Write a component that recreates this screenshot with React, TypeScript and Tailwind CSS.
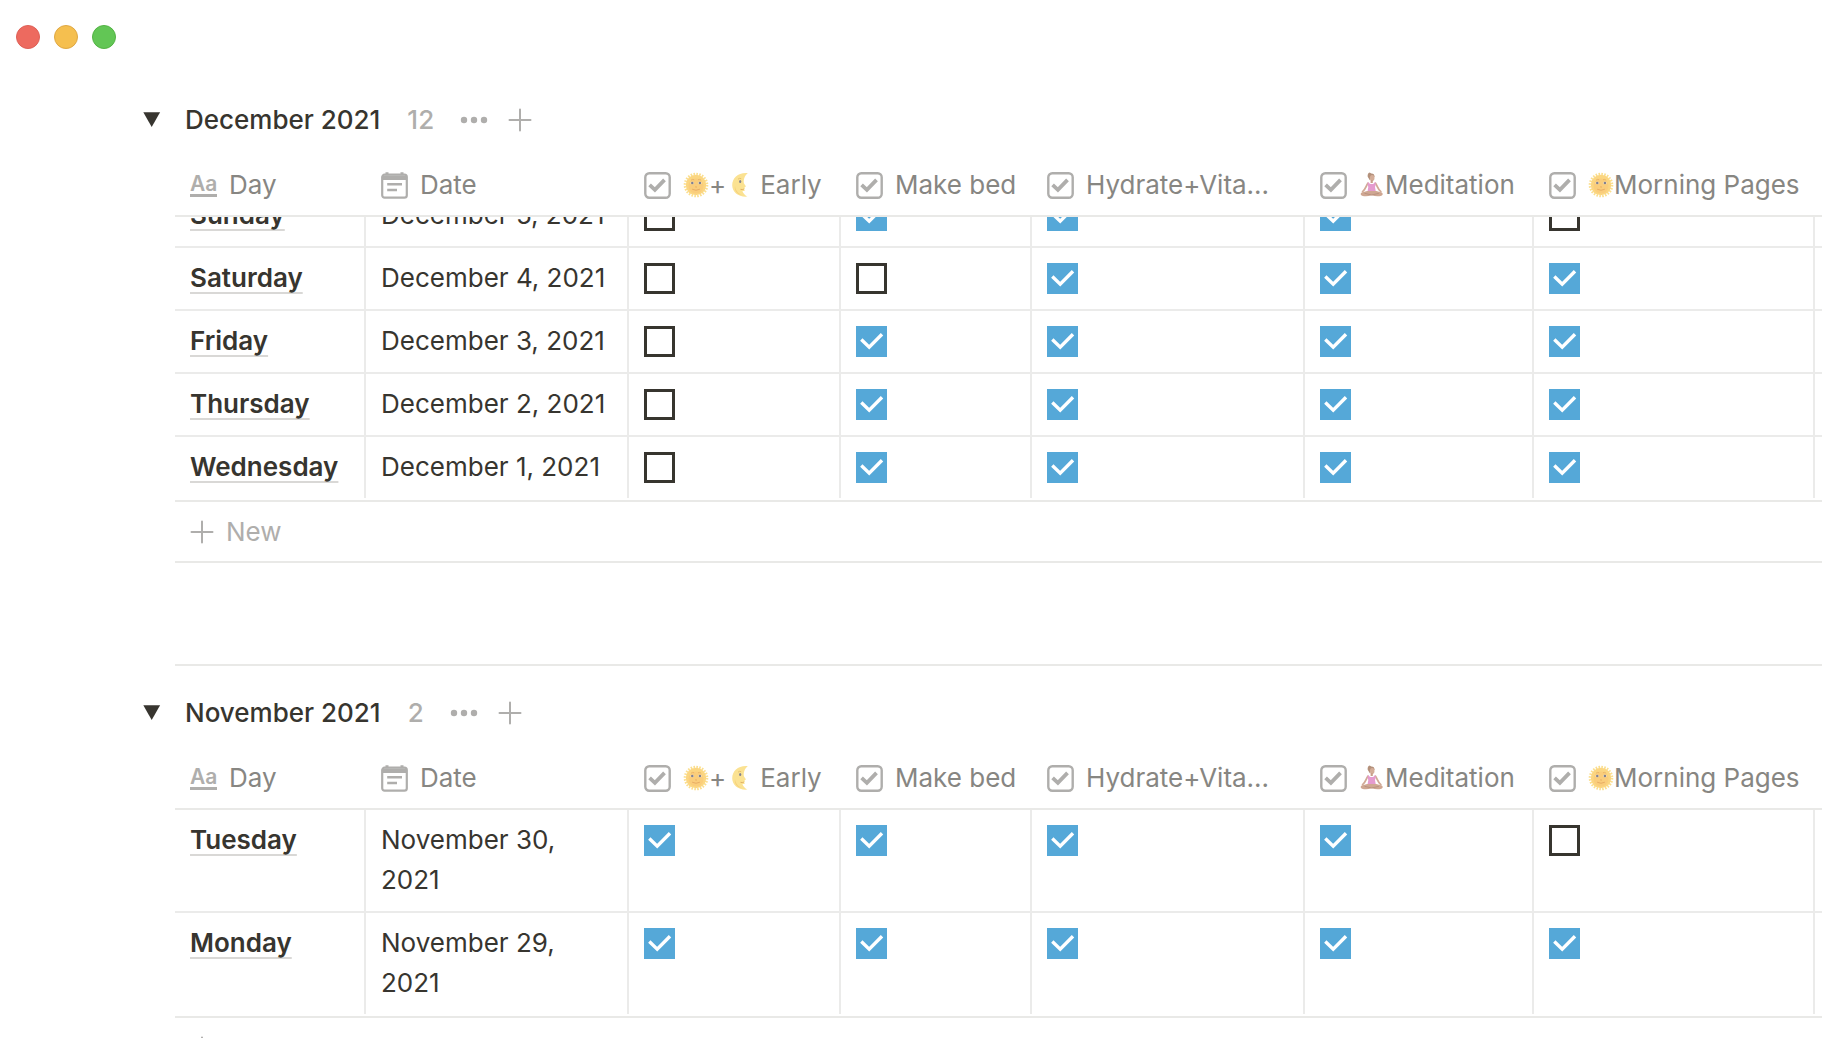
import {ReactNode, useState} from 'react';

type Entry = {
  day: string;
  date: string;
  checks: boolean[];
};

type Group = {
  title: string;
  count: number;
  scrolled: boolean;
  entries: Entry[];
};

const habits = ['Early', 'Make bed', 'Hydrate+Vitamins', 'Meditation', 'Morning Pages'];

const groups: Group[] = [
  {
    title: 'December 2021',
    count: 12,
    scrolled: true,
    entries: [
      {day: 'Sunday', date: 'December 5, 2021', checks: [false, true, true, true, false]},
      {day: 'Saturday', date: 'December 4, 2021', checks: [false, false, true, true, true]},
      {day: 'Friday', date: 'December 3, 2021', checks: [false, true, true, true, true]},
      {day: 'Thursday', date: 'December 2, 2021', checks: [false, true, true, true, true]},
      {day: 'Wednesday', date: 'December 1, 2021', checks: [false, true, true, true, true]},
    ],
  },
  {
    title: 'November 2021',
    count: 2,
    scrolled: false,
    entries: [
      {day: 'Tuesday', date: 'November 30, 2021', checks: [true, true, true, true, false]},
      {day: 'Monday', date: 'November 29, 2021', checks: [true, true, true, true, true]},
    ],
  },
];

function PlusIcon() {
  return (
    <svg className="h-6 w-6" viewBox="0 0 24 24" fill="none" stroke="currentColor" strokeWidth="2" strokeLinecap="round">
      <path d="M12 1.5v21M1.5 12h21"/>
    </svg>
  );
}

function DotsIcon() {
  return (
    <svg className="h-7 w-7" viewBox="0 0 28 28" fill="currentColor">
      <circle cx="4" cy="14" r="3.2"/>
      <circle cx="14" cy="14" r="3.2"/>
      <circle cx="24" cy="14" r="3.2"/>
    </svg>
  );
}

function CalendarIcon() {
  return (
    <svg className="h-[27px] w-[27px] shrink-0 text-[#afaeac]" viewBox="0 0 27 27" fill="none" stroke="currentColor">
      <path d="M4.5 0.3h3v3h-3zM19.5 0.3h3v3h-3z" fill="currentColor" stroke="none"/>
      <rect x="1.2" y="2.7" width="24.6" height="22.9" rx="2.4" strokeWidth="2.2"/>
      <path d="M1 3.5h25v4.5H1z" fill="currentColor" stroke="none"/>
      <path d="M6.2 12.2h14.8M6.2 18h9.8" strokeWidth="2.6"/>
    </svg>
  );
}

function CheckIcon() {
  return (
    <svg className="h-[27px] w-[27px] shrink-0 text-[#afaeac]" viewBox="0 0 27 27" fill="none" stroke="currentColor">
      <rect x="1.3" y="1.3" width="24.4" height="24.4" rx="4" strokeWidth="2.4"/>
      <path d="M5.6 12.9l5.3 5 9.6-10" strokeWidth="3.8"/>
    </svg>
  );
}

function SunEmoji() {
  return (
    <svg className="h-[26px] w-[26px] shrink-0" viewBox="0 0 26 26" fill="none">
      <circle cx="13" cy="13" r="11" stroke="#fbdf8e" strokeWidth="2.6" strokeDasharray="1.6 1.28"/>
      <circle cx="13" cy="13" r="10.2" fill="#fbd681"/>
      <circle cx="13" cy="14" r="7.5" fill="#facd7b"/>
      <path d="M8 8.2q1.6-1.4 3.2-.4M15 7.8q1.6-1 3.2.4" stroke="#e9b265" strokeWidth="0.9"/>
      <ellipse cx="9.3" cy="11" rx="1.8" ry="1.3" fill="#fff1cc"/>
      <ellipse cx="16.9" cy="11" rx="1.8" ry="1.3" fill="#fff1cc"/>
      <circle cx="9.3" cy="11" r="1.3" fill="#83808f"/>
      <circle cx="16.9" cy="11" r="1.3" fill="#83808f"/>
      <path d="M12.2 14.8q.9.7 1.8 0" stroke="#e3a55c" strokeWidth="0.8"/>
      <path d="M9.5 17.4q3.5 1.9 7 0" stroke="#e8ad65" strokeWidth="1" strokeLinecap="round"/>
    </svg>
  );
}

function MoonEmoji() {
  return (
    <svg className="h-[26px] w-[26px] shrink-0" viewBox="0 0 26 26" fill="none">
      <path
        d="M21.8 1.2C12.6.2 6.2 6 6.2 13.2c0 7 6.6 12.2 15.2 11.4-2.600-1.400-4.400-3.400-5-5.600 1.200.3 2.200 0 2.300-.8l-.5-1 .7-.8-.4-1.100c1.400-.3 1.600-.9.9-1.800-1.100-1.400-1.800-2.400-1.700-4.200.1-3.300 1.500-6.200 4.100-8.100z"
        fill="#fbe292"
      />
      <path d="M9 14c.4 4.200 3 7.600 7 9-4.800-.5-8-4.300-7-9z" fill="#f6cf78"/>
      <ellipse cx="14.2" cy="9.6" rx="1.100" ry="1.500" fill="#838290"/>
      <path d="M12 7.200q1.400-1.400 3.200-.6" stroke="#e2bd6c" strokeWidth="0.9"/>
      <path d="M14.5 17.300q1.800.6 3.400-.2" stroke="#dca95f" strokeWidth="0.9"/>
    </svg>
  );
}

function YogaEmoji() {
  return (
    <svg className="h-[26px] w-[26px] shrink-0" viewBox="0 0 26 26" fill="none">
      <path d="M8.7 4.7q-.5-3.300 2-4.200l1.600 1.100q3.200-.1 3.300 3.400l-2.600.6-2.200 2.700z" fill="#b3907a"/>
      <ellipse cx="13.2" cy="6" rx="2.3" ry="2.9" fill="#d4ad98"/>
      <path d="M11.6 8h2.200v3h-2.200z" fill="#c99f8a"/>
      <path d="M8.9 11.2C6.8 14.3 6.6 17.2 3.6 19.6M16.5 11.2c2.100 3.100 2.300 6 5.300 8.400" stroke="#d1aa96" strokeWidth="1.8" strokeLinecap="round"/>
      <path d="M8.800 10.300q1.200.1 1.700 1.200 2.300 1.200 4.400 0 .4-1.100 1.600-1.200.6 2.700-.5 4.600l.8 4.600H8.500l.8-4.600q-1.100-2-.5-4.600z" fill="#e59bcf"/>
      <path d="M8.100 18.900h9.200l5.400 1.700q2.200 1.700-.3 3.200-4.800 1.300-9.700-.6-4.900 1.900-9.700.6-2.500-1.500-.3-3.200z" fill="#cfa792"/>
      <path d="M5.500 21.300l7.200 1.700 7.200-1.700" stroke="#b58e7d" strokeWidth="0.9"/>
    </svg>
  );
}

function ColumnHead({icon, children}: { icon: ReactNode; children: ReactNode }) {
  return (
    <th scope="col" className="border-b-2 border-[#e9e9e7] px-[15px] pb-3 text-left font-normal text-[#878682]">
      <div className="flex h-9 items-center gap-3 whitespace-nowrap">
        {icon}
        <span className="flex items-center">{children}</span>
      </div>
    </th>
  );
}

function Cell({clipped, last, children}: { clipped: boolean; last: boolean; children?: ReactNode }) {
  return (
    <td className={`border-[#ebebea] border-r-2 p-0 align-top last:border-r-0 ${last ? '' : 'border-b-2'}`}>
      {/* a clipped cell keeps only its lower part, the rest is under the header */}
      <div className={clipped ? 'flex h-[29px] items-end overflow-hidden' : ''}>
        <div className="px-[15px] pt-[10px] pb-[11px]">{children}</div>
      </div>
    </td>
  );
}

function Checkbox({label, checked}: { label: string; checked: boolean }) {
  return (
    <label className="mt-[5px] mb-1 grid h-[31px] w-[31px]">
      <input
        type="checkbox"
        aria-label={label}
        defaultChecked={checked}
        className="peer col-start-1 row-start-1 h-[31px] w-[31px] appearance-none border-3 border-[#37352f] bg-white checked:border-[#55a8d8] checked:bg-[#55a8d8]"
      />
      <svg
        className="pointer-events-none col-start-1 row-start-1 hidden h-[31px] w-[31px] peer-checked:block"
        viewBox="0 0 31 31"
        fill="none"
        stroke="white"
        strokeWidth="3.4"
      >
        <path d="M5.3 13.6l7.9 7.600L26 8.200"/>
      </svg>
    </label>
  );
}

function HabitTable({group}: { group: Group }) {
  return (
    <div className="ml-[175px]">
      <table className="w-full table-fixed border-separate border-spacing-0">
        <colgroup>
          <col className="w-[191px]"/>
          <col className="w-[263px]"/>
          <col className="w-[212px]"/>
          <col className="w-[191px]"/>
          <col className="w-[273px]"/>
          <col className="w-[229px]"/>
          <col className="w-[281px]"/>
          <col/>
        </colgroup>
        <thead>
          <tr>
            <ColumnHead
              icon={<span className="w-[27px] border-b-3 border-[#afaeac] text-[21px] leading-5 font-semibold text-[#afaeac]">Aa</span>}
            >
              Day
            </ColumnHead>
            <ColumnHead icon={<CalendarIcon/>}>Date</ColumnHead>
            <ColumnHead icon={<CheckIcon/>}>
              <SunEmoji/>+<MoonEmoji/>
              <span className="ml-2">Early</span>
            </ColumnHead>
            <ColumnHead icon={<CheckIcon/>}>Make bed</ColumnHead>
            <ColumnHead icon={<CheckIcon/>}>Hydrate+Vita...</ColumnHead>
            <ColumnHead icon={<CheckIcon/>}><YogaEmoji/>Meditation</ColumnHead>
            <ColumnHead icon={<CheckIcon/>}><SunEmoji/>Morning Pages</ColumnHead>
            <td className="border-b-2 border-[#e9e9e7]"/>
          </tr>
        </thead>
        <tbody>
          {group.entries.map((entry, row) => {
            const clipped = group.scrolled && row === 0;
            const last = row === group.entries.length - 1;
            return (
              <tr key={entry.day}>
                <Cell clipped={clipped} last={last}>
                  <a
                    href="#"
                    className="font-semibold underline decoration-[#d9d8d6] decoration-2 underline-offset-[5px] [text-decoration-skip-ink:none]"
                  >
                    {entry.day}
                  </a>
                </Cell>
                <Cell clipped={clipped} last={last}>{entry.date}</Cell>
                {entry.checks.map((checked, i) => (
                  <Cell key={habits[i]} clipped={clipped} last={last}>
                    <Checkbox label={`${habits[i]}, ${entry.date}`} checked={checked}/>
                  </Cell>
                ))}
                <td className={last ? '' : 'border-b-2 border-[#ebebea]'}/>
              </tr>
            );
          })}
        </tbody>
      </table>
      <button className="mt-[2px] flex h-[63px] w-full items-center gap-3 border-y-2 border-[#e9e9e7] px-[15px] text-[#afaeac]">
        <PlusIcon/>
        New
      </button>
    </div>
  );
}

function HabitGroup({group}: { group: Group }) {
  const [open, setOpen] = useState(true);

  return (
    <section>
      <div className="flex h-[94px] items-center pl-[143px]">
        <button aria-label="Toggle group" className="mr-6 w-[18px]" onClick={() => setOpen(!open)}>
          <svg className={open ? 'h-[18px] w-[18px]' : 'h-[18px] w-[18px] -rotate-90'} viewBox="0 0 18 18" fill="#37352f">
            <path d="M0.3 1.2h16.8L8.7 16z"/>
          </svg>
        </button>
        <h2 className="font-medium">{group.title}</h2>
        <span className="ml-[27px] font-medium text-[#afaeac]">{group.count}</span>
        <button aria-label="More" className="ml-[26px] text-[#afaeac]"><DotsIcon/></button>
        <button aria-label="Add" className="ml-5 text-[#afaeac]"><PlusIcon/></button>
      </div>
      {open && <HabitTable group={group}/>}
    </section>
  );
}

function App() {
  return (
    <div className="h-screen overflow-hidden bg-white font-['Inter',sans-serif] text-[26px] leading-10 text-[#37352f]">
      <header className="flex h-[73px] items-center gap-[14px] pl-4">
        <span className="h-6 w-6 rounded-full border border-[#de6057] bg-[#ed6a5f]"/>
        <span className="h-6 w-6 rounded-full border border-[#dfa844] bg-[#f5bf4f]"/>
        <span className="h-6 w-6 rounded-full border border-[#53b344] bg-[#62c655]"/>
      </header>
      <main>
        <HabitGroup group={groups[0]}/>
        <div className="mt-[101px] ml-[175px] border-t-2 border-[#e9e9e7]"/>
        <HabitGroup group={groups[1]}/>
      </main>
    </div>
  );
}

export default App;
